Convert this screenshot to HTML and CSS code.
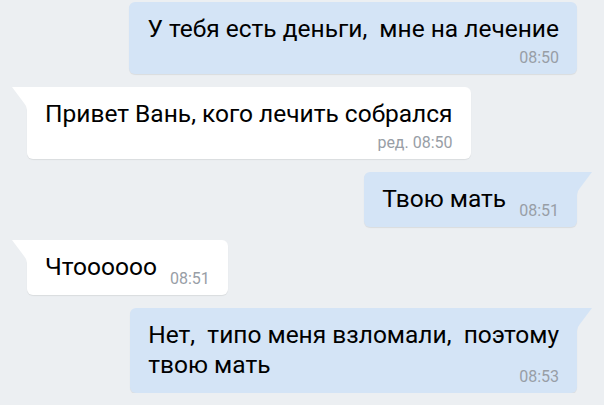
FILE: index.html
```html
<!DOCTYPE html>
<html lang="ru">
<head>
  <meta charset="UTF-8">
  <title>Диалог</title>
  <meta name="viewport" content="width=device-width, initial-scale=1.0">
  <link rel="stylesheet" href="styles.css">
</head>
<body>

<div class="chat">
  <div class="msg out">
    <div class="bubble stacked">
      <div class="text">У тебя есть деньги,  мне на лечение</div>
      <div class="time">08:50</div>
    </div>
  </div>

  <div class="msg in">
    <div class="bubble stacked tail">
      <div class="text">Привет Вань, кого лечить собрался</div>
      <div class="time">ред. 08:50</div>
    </div>
  </div>

  <div class="msg out">
    <div class="bubble tail">
      <div class="text">Твою мать<span class="time">08:51</span></div>
    </div>
  </div>

  <div class="msg in">
    <div class="bubble tail">
      <div class="text">Чтоооооо<span class="time">08:51</span></div>
    </div>
  </div>

  <div class="msg out">
    <div class="bubble tail">
      <div class="text">Нет,  типо меня взломали,  поэтому<br>твою мать<span class="time">08:53</span></div>
    </div>
  </div>
</div>

</body>
</html>
```

FILE: styles.css
```css
body {
  margin: 0;
  background: #eceff2;
  font-family: Roboto, "Noto Sans", sans-serif;
  color: #000;
}
.chat {
  display: flex;
  flex-direction: column;
  gap: 13px;
  padding: 2px 27px 0;
}
.msg {
  display: flex;
}
.msg.out {
  justify-content: flex-end;
}
.msg.in {
  justify-content: flex-start;
}
.bubble {
  position: relative;
  box-sizing: border-box;
  padding: 12px 18px 7px;
  border-radius: 6px;
  box-shadow: 0 1px 1px rgba(0, 0, 0, 0.08);
}
.out .bubble {
  background: #d4e4f6;
}
.in .bubble {
  background: #fff;
}
.text {
  font-size: 24.5px;
  line-height: 30px;
  white-space: pre;
  display: flow-root;
}
.time {
  font-size: 16px;
  line-height: 18px;
  color: #989ea6;
  white-space: nowrap;
}
.stacked .time {
  margin-top: 5px;
  text-align: right;
}
.text .time {
  float: right;
  margin: 18px 0 0 13px;
}

/* хвостики */
.tail::before {
  content: "";
  position: absolute;
  top: 0;
  width: 21px;
  height: 26px;
  background: inherit;
}
.in .tail {
  border-top-left-radius: 0;
}
.in .tail::before {
  left: -15px;
  clip-path: polygon(0 0, 100% 0, 100% 100%, 15px 100%, 15px 23px, 14px 19px, 12px 16px);
}
.out .tail {
  border-top-right-radius: 0;
}
.out .tail::before {
  right: -15px;
  clip-path: polygon(100% 0, 0 0, 0 100%, 6px 100%, 6px 23px, 7px 19px, 9px 16px);
}
```
